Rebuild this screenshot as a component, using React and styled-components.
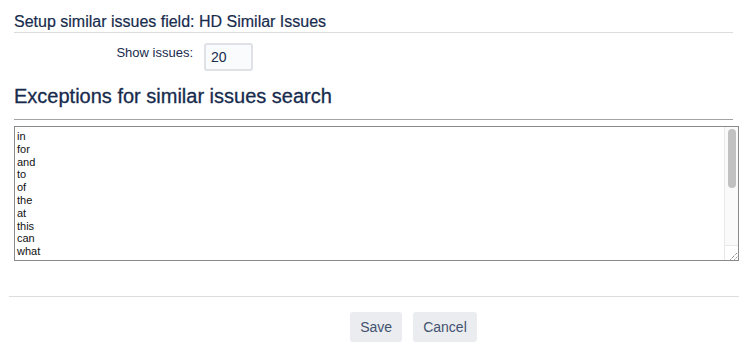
import React from "react";
import styled, { createGlobalStyle } from "styled-components";

const GlobalStyle = createGlobalStyle`
  body {
    margin: 0;
    background: #fff;
  }
`;

const words = [
  "in", "for", "and", "to", "of", "the", "at", "this", "can", "what",
  "is", "on", "with", "a", "an", "by", "from", "how", "it", "be",
];

// resize grip drawn in the corner of the scroll track
const ResizeGrip = () => (
  <svg width="13" height="14" viewBox="0 0 13 14">
    <path
      d="M5.5 13.5 L12.5 6.5 M9.5 13.5 L12.5 10.5"
      stroke="#555"
      strokeWidth="1"
      strokeDasharray="1 1"
      fill="none"
    />
  </svg>
);

const App = () => {
  return (
    <Page onSubmit={(e) => e.preventDefault()}>
      <GlobalStyle />
      {/* FIELD SETUP */}
      <Section>
        <Title>Setup similar issues field: HD Similar Issues</Title>
        <FieldRow>
          <Label htmlFor="show-issues">Show issues:</Label>
          <NumberInput id="show-issues" defaultValue="20" />
        </FieldRow>
        <Heading>Exceptions for similar issues search</Heading>
      </Section>

      {/* EXCEPTIONS LIST */}
      <TextBox>
        <Exceptions defaultValue={words.join("\n")} spellCheck={false} />
        <ScrollTrack>
          <ScrollThumb />
          <Corner>
            <ResizeGrip />
          </Corner>
        </ScrollTrack>
      </TextBox>

      {/* FORM ACTIONS */}
      <Actions>
        <Button type="submit">Save</Button>
        <Button type="button">Cancel</Button>
      </Actions>
    </Page>
  );
};

// STYLED COMPONENTS
const Page = styled.form`
  padding: 0 11px 0 9px;
  font-family: "Liberation Sans", Arial, sans-serif;
  color: #172b4d;
`;

const Section = styled.div`
  padding: 0 6px 0 5px;
`;

const Title = styled.h3`
  margin: 0;
  padding-top: 12px;
  font-size: 16px;
  line-height: 20px;
  font-weight: 400;
  -webkit-text-stroke: 0.2px #172b4d;
  border-bottom: 1px solid #dcdcdc;
`;

const FieldRow = styled.div`
  display: grid;
  grid-template-columns: 179px auto;
  column-gap: 11px;
  align-items: start;
  margin-top: 10px;
`;

const Label = styled.label`
  text-align: right;
  font-size: 13px;
  line-height: 16px;
  padding-top: 2px;
  color: #172b4d;
`;

const NumberInput = styled.input`
  box-sizing: border-box;
  width: 49px;
  height: 28px;
  padding: 0 5px;
  border: 2px solid #dfe1e6;
  border-radius: 3px;
  background: #fafbfc;
  font-family: inherit;
  font-size: 14px;
  color: #172b4d;
  outline: none;
`;

const Heading = styled.h2`
  margin: 13px 0 0;
  padding-bottom: 11px;
  font-size: 20px;
  line-height: 24px;
  font-weight: 400;
  -webkit-text-stroke: 0.3px #172b4d;
  border-bottom: 1px solid #a3a3a3;
`;

const TextBox = styled.div`
  display: flex;
  box-sizing: border-box;
  height: 135px;
  margin: 6px 0 0 5px;
  border: 1px solid #8a8a8a;
  background: #fff;
`;

const Exceptions = styled.textarea`
  flex: 1;
  min-width: 0;
  margin: 0;
  padding: 3px 2px;
  border: none;
  resize: none;
  overflow: hidden;
  font-family: "Liberation Sans", Arial, sans-serif;
  font-size: 11px;
  line-height: 12.8px;
  color: #111;
  outline: none;
`;

const ScrollTrack = styled.div`
  display: flex;
  flex-direction: column;
  justify-content: space-between;
  width: 13px;
  background: #fafafa;
  border-left: 1px solid #e8e8e8;
`;

const ScrollThumb = styled.div`
  width: 8px;
  height: 59px;
  margin: 2px 0 0 3px;
  border-radius: 4px;
  background: #c1c1c1;
`;

const Corner = styled.div`
  display: flex;
  height: 14px;
  background: #fff;
  border-top: 1px solid #e8e8e8;
`;

const Actions = styled.div`
  display: flex;
  justify-content: center;
  gap: 11px;
  margin-top: 35px;
  padding: 15px 0 0 79px;
  border-top: 1px solid #dddddd;
`;

const Button = styled.button`
  height: 30px;
  padding: 0 10px;
  border: none;
  border-radius: 3px;
  background: #ebecf0;
  color: #42526e;
  font-family: "Liberation Sans", Arial, sans-serif;
  font-size: 14px;
  cursor: pointer;
`;

export default App;
